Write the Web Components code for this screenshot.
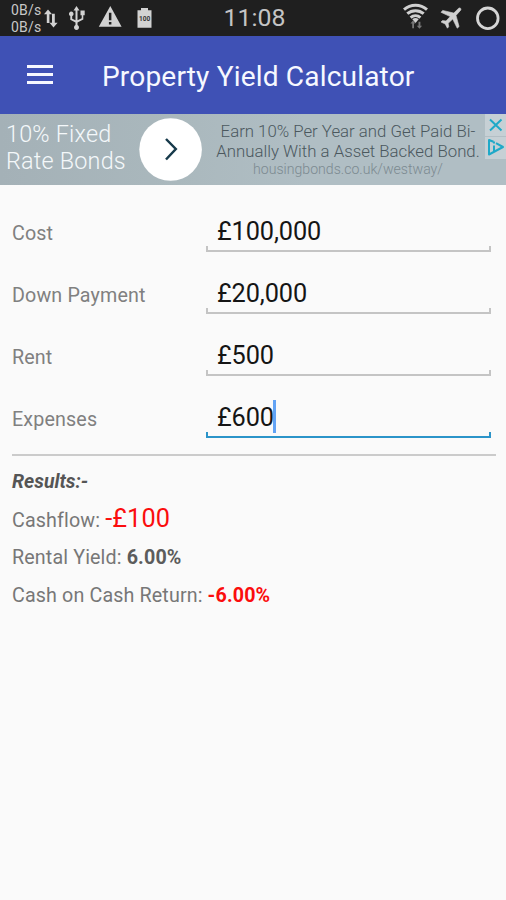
<!DOCTYPE html>
<html lang="en">
<head>
<meta charset="utf-8">
<title>Property Yield Calculator</title>
<style>
    body {
        margin: 0;
        background: #fafafa;
        font-family: Roboto, sans-serif;
    }
</style>
</head>
<body>
<yield-app></yield-app>

<script>
class StatusBar extends HTMLElement {
    constructor() {
        super();
        this.attachShadow({ mode: 'open' });
        this.shadowRoot.innerHTML = `
            <style>
                :host {
                    display: grid;
                    grid-template-columns: 1fr auto 1fr;
                    align-items: center;
                    height: 36px;
                    background: #1f1f1f;
                    color: #c8c8c8;
                }
                .group { display: flex; align-items: center; height: 36px; }
                .right { justify-content: flex-end; }
                .speed {
                    width: 31px;
                    padding: 1px 0 0 11px;
                    font-size: 14px;
                    line-height: 16.5px;
                    letter-spacing: 0.2px;
                    white-space: nowrap;
                }
                .clock { padding-left: 3px; font-size: 24.8px; line-height: 36px; color: #c4c4c4; }
                svg { display: block; flex: none; }
            </style>
            <div class="group">
                <div class="speed">0B/s<br>0B/s</div>
                <svg width="118" height="36" viewBox="42 0 118 36" fill="#d2d2d2">
                    <path d="M48 9.500l4 4.800h-2.600V23h-2.600v-8.700H44zM53.500 27.500l-4-4.800h2.500v-9h2.800v9h2.800z"/>
                    <path d="M76.500 6l3 4.600h-2v9.600l4.200-2v-3h-1.200v-4.600h4.200v4.600h-1.400v4.400l-5.800 2.900v2.600a2.500 2.500 0 1 1-2 0v-2.600l-5.200-2.700v-3.800a2.300 2.300 0 1 1 1.900 0v2.700l3.300 1.600v-9.700h-2z"/>
                    <path fill-rule="evenodd" d="M110.300 6L121.600 26.700H98.800zM108.900 12.800v7.400h2.500v-7.400zM108.900 22v2.500h2.500V22z"/>
                    <path d="M141 8h7v2.200h3.500v17.500h-14V10.200h3.500z"/>
                    <text x="139" y="21" font-family="Roboto" font-weight="700" font-size="6.500" fill="#333">100</text>
                </svg>
            </div>
            <div class="clock">11:08</div>
            <div class="group right">
                <svg width="106" height="36" viewBox="400 0 106 36">
                    <g fill="none" stroke="#d0d0d0" stroke-width="3">
                        <path d="M404 9.600a17.500 17.500 0 0 1 23 0"/>
                        <path d="M407.300 13.700a12.500 12.500 0 0 1 16.400 0"/>
                        <path d="M410.600 17.600a7.500 7.500 0 0 1 9.800 0"/>
                    </g>
                    <path fill="#d0d0d0" d="M412.300 19.300a5 5 0 0 1 6.400 0l-3.200 3.600z"/>
                    <path fill="#777" d="M413 20.500l2.500 3h-1.500v4.700h-1.800v-4.700h-1.700zM419.500 28.800l-2.700-3h1.700v-4h1.900v4h1.700z"/>
                    <path fill="#d0d0d0" stroke="#d0d0d0" stroke-width=".6" d="M458.700 8.200c1.300-1 3 .5 2 2l-4.700 5.200 3.100 11.200-1.900 1.600-4.500-9.100-4.500 4.200.5 3.500-1.300 1.400-2.200-4.200-4.200-2 1.500-1.400 3.500.4 4.200-4.400-9.200-4.300 1.700-1.900 11.100 2.700z"/>
                    <circle cx="487.800" cy="18.300" r="10.300" fill="none" stroke="#d6d6d6" stroke-width="2.800"/>
                </svg>
            </div>
        `;
    }
}

class AppToolbar extends HTMLElement {
    constructor() {
        super();
        this.attachShadow({ mode: 'open' });
        this.shadowRoot.innerHTML = `
            <style>
                :host {
                    display: flex;
                    align-items: center;
                    height: 78px;
                    padding-left: 27px;
                    gap: 49px;
                    box-sizing: border-box;
                    background: #3f51b5;
                    color: #f6f8ff;
                    font-size: 28.1px;
                    line-height: 40px;
                    letter-spacing: 0.15px;
                    white-space: nowrap;
                }
                .menu { display: grid; gap: 5px; width: 26px; padding-bottom: 1px; }
                .menu i { height: 3px; background: #f6f8ff; }
                .title { padding-top: 3px; }
            </style>
            <div class="menu"><i></i><i></i><i></i></div>
            <div class="title"><slot></slot></div>
        `;
    }
}

class AdBanner extends HTMLElement {
    constructor() {
        super();
        this.attachShadow({ mode: 'open' });
        this.shadowRoot.innerHTML = `
            <style>
                :host {
                    display: flex;
                    position: relative;
                    height: 71px;
                    box-sizing: border-box;
                    background: linear-gradient(90deg, #a4b1b7, #aab8bd 35%, #b0bec4 60%, #b0bec4);
                    white-space: nowrap;
                }
                .headline {
                    width: 133px;
                    padding: 7px 0 0 6px;
                    font-size: 23.4px;
                    line-height: 26.5px;
                    letter-spacing: 0.2px;
                    font-weight: 300;
                    color: #f4f8fa;
                }
                .go { margin-top: 4px; }
                .copy {
                    width: 290px;
                    padding-top: 7px;
                    text-align: center;
                    font-size: 16.8px;
                    line-height: 20px;
                    font-weight: 300;
                    color: #4b585e;
                }
                .url { font-size: 14.1px; line-height: 17px; color: #7c8a91; }
                .choices { position: absolute; right: 0; top: 0; }
            </style>
            <div class="headline"><slot name="headline"></slot></div>
            <svg class="go" width="64" height="64" viewBox="0 0 64 64">
                <circle cx="31.600" cy="31.500" r="31.300" fill="#fff"/>
                <path d="M27 21l9.800 10L27 41.500" fill="none" stroke="#173a4b" stroke-width="2.500"/>
            </svg>
            <div class="copy">
                <slot name="copy"></slot>
                <div class="url"><slot name="url"></slot></div>
            </div>
            <svg class="choices" width="21" height="45" viewBox="0 0 21 45" fill="none">
                <path fill="#c6d0d5" d="M0 0h21v45H0z"/>
                <path stroke="#b3bfc5" d="M0 22.500h21"/>
                <path stroke="#1fa9c8" stroke-width="2" d="M5 5.500L16.500 16.500M16.500 5.500L5 16.500"/>
                <path stroke="#1fa9c8" stroke-width="2" stroke-linejoin="round" d="M8.500 27.800L4 26v14.500L18 33 11 29.200M9 31.500v6"/>
                <path fill="#1fa9c8" d="M8 27.500h2v2H8z"/>
            </svg>
        `;
    }
}

class MoneyField extends HTMLElement {
    constructor() {
        super();
        this.attachShadow({ mode: 'open' });
        this.shadowRoot.innerHTML = `
            <style>
                :host {
                    --line: #c4c4c4;
                    display: grid;
                    grid-template-columns: 194px 285px;
                    align-items: end;
                    height: 62px;
                    padding-left: 12px;
                    white-space: nowrap;
                }
                :host([focused]) { --line: #2b94c9; }
                .label {
                    padding-bottom: 6px;
                    font-size: 19.7px;
                    line-height: 24px;
                    letter-spacing: 0.14px;
                    color: #808080;
                }
                .box {
                    display: flex;
                    align-items: flex-end;
                    height: 38px;
                    padding: 0 0 4px 11px;
                    font-size: 25.3px;
                    line-height: 33px;
                    letter-spacing: -0.1px;
                    color: #151515;
                    background:
                        linear-gradient(var(--line), var(--line)) left bottom / 2px 6px no-repeat,
                        linear-gradient(var(--line), var(--line)) right bottom / 2px 6px no-repeat,
                        linear-gradient(var(--line), var(--line)) left bottom / 100% 2px no-repeat;
                }
                .caret { display: none; width: 3px; height: 33px; margin: 0 0 1.5px -1px; background: #62a3f5; }
                :host([focused]) .caret { display: block; }
            </style>
            <div class="label">${this.getAttribute('label')}</div>
            <div class="box"><slot></slot><span class="caret"></span></div>
        `;
    }
}

class ResultRow extends HTMLElement {
    constructor() {
        super();
        this.attachShadow({ mode: 'open' });
        this.shadowRoot.innerHTML = `
            <style>
                :host {
                    display: block;
                    height: 38px;
                    font-size: 19.7px;
                    line-height: 38px;
                    letter-spacing: 0.13px;
                    color: #777;
                    white-space: nowrap;
                }
                .value { font-weight: 700; color: #5c5c5c; }
                :host([negative]) .value { color: #fb0d0d; }
                :host([large]) { line-height: 36px; }
                :host([large]) .value { font-weight: 400; font-size: 25.3px; }
            </style>
            <span class="name">${this.getAttribute('label')}</span>
            <span class="value"><slot></slot></span>
        `;
    }
}

class YieldApp extends HTMLElement {
    constructor() {
        super();
        this.attachShadow({ mode: 'open' });
        this.shadowRoot.innerHTML = `
            <style>
                :host { display: block; height: 900px; overflow: hidden; background: #fafafa; }
                .form { padding-top: 5px; }
                .results {
                    margin: 16px 10px 0 12px;
                    padding-top: 7px;
                    border-top: 2px solid #cbcbcb;
                }
                .heading {
                    font-size: 19.4px;
                    line-height: 38px;
                    font-weight: 700;
                    font-style: italic;
                    color: #555;
                }
            </style>
            <status-bar></status-bar>
            <app-toolbar>Property Yield Calculator</app-toolbar>
            <ad-banner>
                <span slot="headline">10% Fixed<br>Rate Bonds</span>
                <span slot="copy">Earn 10% Per Year and Get Paid Bi-<br>Annually With a Asset Backed Bond.</span>
                <span slot="url">housingbonds.co.uk/westway/</span>
            </ad-banner>
            <div class="form">
                <money-field label="Cost">£100,000</money-field>
                <money-field label="Down Payment">£20,000</money-field>
                <money-field label="Rent">£500</money-field>
                <money-field label="Expenses" focused>£600</money-field>
            </div>
            <div class="results">
                <div class="heading">Results:-</div>
                <result-row label="Cashflow:" negative large>-£100</result-row>
                <result-row label="Rental Yield:">6.00%</result-row>
                <result-row label="Cash on Cash Return:" negative>-6.00%</result-row>
            </div>
        `;
    }
}

window.customElements.define('status-bar', StatusBar);
window.customElements.define('app-toolbar', AppToolbar);
window.customElements.define('ad-banner', AdBanner);
window.customElements.define('money-field', MoneyField);
window.customElements.define('result-row', ResultRow);
window.customElements.define('yield-app', YieldApp);
</script>
</body>
</html>
